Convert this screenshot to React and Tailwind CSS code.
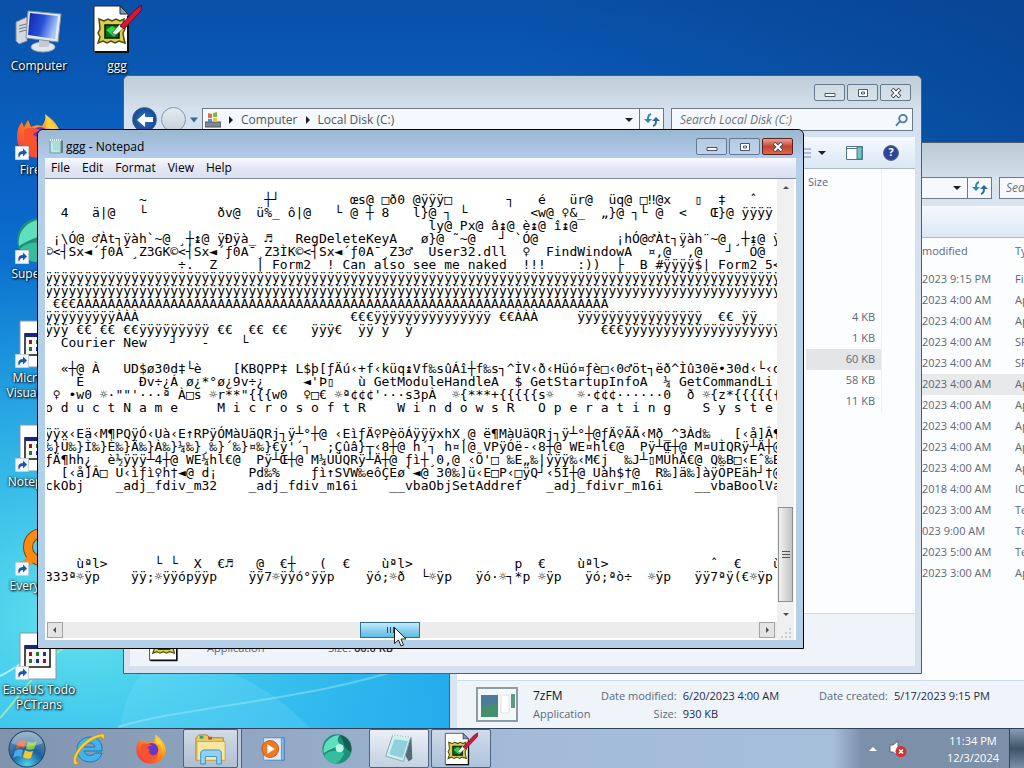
import React from "react";

// a glyph is a little narrower than 8px, so far columns need an extra space
const pad = (cells) =>
  cells.reduce(
    (line, [col, text]) => line.padEnd(Math.round(col * 1.022), " ") + text,
    ""
  );

const y = (count) => "ÿ".repeat(count);

// every entry is one line of the file, as [column, text] pairs
const LINES = [
  [],
  [[12, "~"], [27, "┼┘"], [38, "œs@"], [42, "□ð0"], [46, "@ÿÿÿ□"], [58, "┐"], [62, "é"], [66, "ür@"], [70, "üq@"], [74, "□‼@"], [77, "x"], [81, "▯"], [84, "‡"], [88, "ˆ"]],
  [[2, "4"], [6, "ä|@"], [12, "└"], [22, "ðv@"], [26, "ü%_"], [30, "ô|@"], [36, "└"], [38, "@"], [40, "┼"], [42, "8"], [46, "l}@"], [50, "┐"], [52, "└"], [61, "<w@"], [65, "♀&_"], [69, "„}@"], [73, "┐"], [74, "└"], [76, "@"], [79, "<"], [83, "Œ}@"], [87, "ÿÿÿÿ"]],
  [[48, "ly@"], [51, " Px@"], [56, "â↨@"], [59, " è↨@"], [63, " î↨@"]],
  [[1, "¡\\Ó@"], [6, "♂Àt┐ÿàh`~@"], [17, "¸┼↨@"], [20, " ÿÐÿà_"], [27, "♬"], [31, "RegDeleteKeyA"], [47, "ø}@"], [51, "˜~@"], [57, "┘"], [59, "`Ó@"], [71, "¡hÓ@"], [75, "♂Àt┐ÿàh¨~@"], [86, "¸┼↨@ ÿÐ"]],
  [[0, "©<┤Sx◄´ƒ0A¯¸Z3GK©<┤Sx◄´ƒ0A¯¸Z3ÌK©<┤Sx◄´ƒ0A¯¸Z3♂"], [47, " User32.dll"], [60, "♀"], [63, "FindWindowA"], [75, "¤,@"], [79, "´,@"], [85, "┘"], [88, "Ó@"]],
  [[17, "÷."], [21, "Z"], [26, "|"], [28, "Form2"], [35, "!"], [37, "Can also see me naked"], [60, "!!!"], [67, ":))"], [71, "├"], [74, "B"], [76, "#ÿÿÿÿ$|"], [84, "Form2"], [90, "5<"]],
  [[0, y(94)]],
  [[0, y(94)]],
  [[1, "€€€" + "À".repeat(68)]],
  [[0, y(9) + "ÀÀÀ"], [38, "€€€" + y(15)], [57, "€€ÀÀÀ"], [67, y(16)], [84, "€€"], [87, "ÿÿ"]],
  [[0, y(3)], [4, "€€"], [7, "€€"], [10, "€€" + y(9)], [22, "€€"], [25, "€€"], [28, "€€"], [33, "ÿÿÿ€"], [39, "ÿÿ"], [42, "ÿ"], [45, "ÿ"], [69, "€€€" + y(21)]],
  [[2, "Courier New"], [16, "┘"], [20, "-"], [24, "└"]],
  [],
  [[2, "«┼@"], [5, " À"], [10, "UD$ø30d‡└è"], [23, "[KBQPP‡"], [31, "L$þ[ƒÄú‹+f‹küq↨"], [45, "Vf‰sûÁî┼f‰s┐"], [57, "^ÌV‹ð‹Hüó¤ƒè□‹"], [70, "0♂öt┐"], [75, "ëð^Ìû30ë•30d‹└‹"], [91, "d·"]],
  [[4, "È"], [12, "Ðv÷¿Á"], [18, "ø¿*°ø¿9v÷¿"], [32, "◄'Þ▯"], [39, "ù"], [41, "GetModuleHandleA"], [59, "$"], [61, "GetStartupInfoA"], [77, "¼"], [79, "GetCommandLi"]],
  [[1, "♀"], [3, "•w0"], [7, "☼·\"\"'"], [12, "···ª"], [17, "À□s"], [21, "☼r**\"{{{w0"], [32, "♀□€"], [36, "☼ª¢¢¢'"], [42, "···s3pÀ"], [51, "☼{***+{{{{{s☼"], [67, "☼·¢¢¢······0"], [80, "ð"], [82, "☼{z*{{{{{{"]],
  [[0, "o d u c t N a m e"], [22, "M i c r o s o f t R"], [44, "W i n d o w s R"], [62, "O p e r a t i n g"], [82, "S y s t e"]],
  [],
  [[0, "ÿÿx‹Eä‹M¶PQÿÓ‹Uà‹E↑RPÿÓMàUäQRj┐ÿ┴°┼@"], [35, " ‹EìƒÄ♀PèöÁÿÿÿxhX¸@"], [53, " ë¶MàUäQRj┐ÿ┴°┼@"], [69, "ƒÄ♀ÃÃ‹Mð_^3Àd‰"], [86, "[‹å]Â¶"]],
  [[0, "‰}Ü‰}Ì‰}È‰}Ä‰}À‰}¼‰}¸‰}´‰}¤‰}€ÿ'´┐"], [35, ";Çûâ}┬‹8┼@"], [46, "h´┐"], [50, "h¤|@"], [55, "VPÿÓë-‹8┼@"], [65, " WE¤hl€@"], [73, " Pÿ┴Œ┼@"], [80, " M¤UÌQRÿ┴Ä┼@ƒ"]],
  [[0, "ƒÄ¶hh¿"], [8, "è½ÿÿÿ┴4┼@"], [18, "WE¼hl€@"], [26, "Pÿ┴Œ┼@"], [32, " M¼UÜQRÿ┴Ä┼@"], [44, " ƒì┼¸0,@"], [52, " ‹Õ'□"], [58, "‰E„‰|ÿÿÿ‰‹M€j"], [72, "‰J┴▯MÜhÄ€@"], [82, " Q‰B□‹Eˆ‰B♀U"]],
  [[2, "[‹å]Â□"], [9, "U‹ìƒì♀h†◄@"], [19, " d¡"], [25, "Pd‰%"], [33, "ƒì↑SVW‰eôÇEø`◄@"], [48, " 30‰]ü‹E□P‹□ÿQ┘‹5Ì┼@"], [68, " Uàh$†@"], [75, " R‰]ä‰]àÿÖPEäh┘†@"], [91, " Pÿ"]],
  [[0, "ckObj"], [9, "_adj_fdiv_m32"], [25, "_adj_fdiv_m16i"], [43, "__vbaObjSetAddref"], [63, "_adj_fdivr_m16i"], [81, "__vbaBoolVa"]],
  [],
  [],
  [],
  [],
  [],
  [[4, "ùªl>"], [14, "└"], [16, "└"], [19, "X"], [22, "€♬"], [26, "@"], [29, "€┼"], [34, "("], [37, "€"], [42, "ùªl>"], [59, "p"], [62, "€"], [67, "ùªl>"], [83, "ˆ"], [86, "€"], [91, "ù"]],
  [[0, "333ª☼ÿp"], [11, "ÿÿ;☼ÿÿópÿÿp"], [25, "ÿÿ7☼ÿÿó°ÿÿp"], [40, "ÿó;☼ð"], [47, "└☼ÿp"], [54, "ÿó·☼┐*p"], [61, " ☼ÿp"], [68, "ÿó;ªò÷"], [75, "☼ÿp"], [81, "ÿÿ7ªÿ(€☼ÿp"]],
];

const FILES = [
  ["5/17/2023 9:15 PM", "File folder"],
  ["6/20/2023 4:00 AM", "Application"],
  ["6/20/2023 4:00 AM", "Application"],
  ["6/20/2023 4:00 AM", "SFX File"],
  ["6/20/2023 4:00 AM", "SFX File"],
  ["6/20/2023 4:00 AM", "Application"],
  ["6/20/2023 4:00 AM", "Application"],
  ["6/20/2023 4:00 AM", "Application"],
  ["6/20/2023 4:00 AM", "Application"],
  ["6/20/2023 4:00 AM", "Application"],
  ["6/20/2018 4:00 AM", "ICO File"],
  ["6/20/2023 3:00 AM", "Text Document"],
  ["6/4/2023 9:00 AM", "Text Document"],
  ["5/17/2023 5:00 AM", "Text Document"],
  ["5/17/2023 3:00 AM", "Application"],
];

const SIZES = ["4 KB", "1 KB", "60 KB", "58 KB", "11 KB"];

const FirefoxIcon = ({ className }) => (
  <svg viewBox="0 0 48 48" className={className}>
    <defs>
      <linearGradient id="fox" x1="1" y1="0" x2="0" y2="1">
        <stop offset="0" stopColor="#ffe53a" />
        <stop offset=".45" stopColor="#ff8a1c" />
        <stop offset="1" stopColor="#f0264c" />
      </linearGradient>
    </defs>
    <path d="M30 2c7 5 15 12 16 23 0 12-9 21-22 21S2 37 2 25c0-7 2-12 5-15l2 5 4-7 3 7c4-2 8-2 11-1 3-4 4-8 3-12z" fill="url(#fox)" />
    <circle cx="25" cy="25" r="10" fill="#6a35c9" />
    <path d="M9 18c6-4 12-2 17 1-5 0-7 2-8 4 4 1 5 3 3 5 1 6 9 7 13 2 1 6-4 11-12 10-9-1-15-9-13-22z" fill="#f9532e" />
    <path d="M30 3c7 6 13 13 12 24-2-7-5-10-11-12 1-5 1-9-1-12z" fill="#ffd23c" />
  </svg>
);

const OrbIcon = ({ className }) => (
  <svg viewBox="0 0 48 48" className={className}>
    <circle cx="24" cy="24" r="22" fill="#1d8f7c" />
    <path d="M4 30C2 14 14 4 28 3c-6 7-2 14 6 16C22 20 14 24 4 30z" fill="#5fe0bd" />
    <path d="M28 3c14 2 20 14 17 26-6-4-11-9-11-14-1-4-4-8-6-12z" fill="#175f54" />
    <path d="M5 33c8-8 20-8 30-3-3 8-8 15-15 16C12 45 7 40 5 33z" fill="#35bd9c" />
    <circle cx="28" cy="23" r="6" fill="#bdf5e4" />
  </svg>
);

const GggIcon = ({ className }) => (
  <svg viewBox="0 0 50 50" className={className}>
    <path d="M2 2h26l8 8v38H2z" fill="#fff" stroke="#20242c" strokeWidth="1" />
    <path d="M36 12v36H3" fill="none" stroke="#101010" strokeWidth="2" />
    <path d="M28 2v8h8z" fill="#7f9fc0" stroke="#222" />
    <path d="M7 15l5 2 4-2 4 2 4-2 4 2 4-2-1 6 2 4-2 4 1 6 1 4-6-2-4 2-4-2-4 2-4-2-5 2 2-6-2-4 2-4z" fill="#d8cf4c" stroke="#4d4a12" strokeWidth="1.500" />
    <path d="M13 21h14v13H13z" fill="#0b6c1c" stroke="#111" strokeWidth="1.500" />
    <path d="M14 26l6-4 7 4-5 7z" fill="#2fd44b" />
    <path d="M20 29l4 2 8-7-4-4z" fill="#e8ffe0" stroke="#333" strokeWidth=".6" />
    <path d="M28 22l16-17 6-4-1 6-17 18z" fill="#d3173f" stroke="#6a0b20" strokeWidth="1" />
  </svg>
);

const ShortcutBadge = () => (
  <svg viewBox="0 0 14 14" className="absolute bottom-0 left-0 h-3.5 w-3.5">
    <rect width="14" height="14" fill="#f4f7fb" stroke="#9aa8b8" />
    <path d="M4 12c-2-4 0-7 4-7V2.500l4 4-4 4V8C5.500 8 4.500 9.500 4 12z" fill="#1b57a8" />
  </svg>
);

const ComputerIcon = () => (
  <svg viewBox="0 0 48 48" className="h-12 w-12">
    <defs>
      <linearGradient id="screen" x1="0" y1="0" x2="1" y2=".3">
        <stop offset="0" stopColor="#1226a8" />
        <stop offset=".55" stopColor="#2550d8" />
        <stop offset="1" stopColor="#a9c6f7" />
      </linearGradient>
    </defs>
    <path d="M1 14l11-5v24l-8 3-3-3z" fill="#d4d9df" stroke="#7c8794" />
    <path d="M4 18l7-2M4 21l7-2M4 24l7-2" stroke="#69747f" />
    <ellipse cx="28" cy="39" rx="12" ry="5" fill="#e3e7ec" stroke="#9aa4b1" />
    <path d="M24 31h10v8H24z" fill="#c3cad3" />
    <path d="M13 3l33 3-3 28-32-4z" fill="#e5e9ef" stroke="#8391a5" />
    <path d="M15 5l28 3-3 23-27-4z" fill="url(#screen)" />
  </svg>
);

const DocIcon = () => (
  <svg viewBox="0 0 40 48" className="h-12 w-10">
    <path d="M1 1h36v46H1z" fill="#fff" stroke="#8b95a4" />
    <path d="M6 14h25v21H6z" fill="#f8f8f2" stroke="#111" strokeWidth="1.500" />
    <path d="M6 13h25v4H6z" fill="#1a237e" />
    <path d="M10 20h3v4h-3zM24 27h3v4h-3z" fill="#8c1a2a" />
    <path d="M17 20h3v4h-3zM10 27h3v4h-3z" fill="#1f7a2d" />
    <path d="M24 20h3v4h-3zM17 27h3v4h-3z" fill="#1d2bb8" />
  </svg>
);

const EverythingIcon = () => (
  <svg viewBox="0 0 48 48" className="h-12 w-12">
    <circle cx="27" cy="19" r="14" fill="none" stroke="#8a4300" strokeWidth="10" />
    <circle cx="27" cy="19" r="14" fill="none" stroke="#ff8a12" strokeWidth="8" />
    <path d="M17 29L6 42" stroke="#ff8a12" strokeWidth="8" />
  </svg>
);

const StartIcon = () => (
  <svg viewBox="0 0 40 40" className="h-10 w-10">
    <defs>
      <radialGradient id="start" cx=".5" cy=".95" r=".9">
        <stop offset="0" stopColor="#4fd6f5" />
        <stop offset=".5" stopColor="#1c5f9c" />
        <stop offset="1" stopColor="#6e93b5" />
      </radialGradient>
    </defs>
    <circle cx="20" cy="20" r="18" fill="url(#start)" stroke="#24405f" />
    <path d="M11 13c3-2 5-2 8-1l-2 7c-3-1-5-1-8 1z" fill="#ee5a24" />
    <path d="M21 12c3 2 5 2 9 0l-3 8c-3 1-5 1-8 0z" fill="#8fc63f" />
    <path d="M8 22c3-2 5-2 8-1l-2 7c-3-1-5-1-8 1z" fill="#4aa9e8" />
    <path d="M18 21c3 2 5 2 8 1l-2 7c-3 1-5 1-8-1z" fill="#fbc52c" />
    <path d="M4 14a17 17 0 0 1 32 0c-9 4-22 5-32 0z" fill="#fff" opacity=".3" />
  </svg>
);

const IeIcon = () => (
  <svg viewBox="0 0 36 36" className="h-9 w-9">
    <path d="M19 6c8 0 13 6 12 14H13c1 5 8 6 11 2h7c-2 6-6 9-12 9C11 31 6 25 6 18.500 6 11 12 6 19 6zm-6 10h11c-1-5-9-6-11 0z" fill="#45b3ea" stroke="#1b78b8" />
    <path d="M3 33C-1 26 12 6 30 3c5-1 4 4 2 7 1-4-2-5-6-3C14 12 6 22 5 29c0 2 2 3 4 2-2 2-4 3-6 2z" fill="#f6cf3a" stroke="#b98b12" strokeWidth=".6" />
  </svg>
);

const FolderIcon = () => (
  <svg viewBox="0 0 36 34" className="h-8 w-9">
    <path d="M2 5l3-3h9l2 3h15v24H2z" fill="#e9c867" stroke="#a88431" />
    <path d="M6 3h4v3H6z" fill="#3da35a" />
    <path d="M15 4h4v3h-4z" fill="#c9483f" />
    <path d="M3 9h30v20H3z" fill="#f8e7a0" stroke="#c9a54c" />
    <path d="M7 33V22c0-3 2-4 4-4h14c3 0 4 1 4 4v11h-5v-8H12v8z" fill="#8fd2f2" stroke="#3c8fc6" />
  </svg>
);

const PlayerIcon = () => (
  <svg viewBox="0 0 30 30" className="h-7 w-7">
    <path d="M9 3h18v24H9z" fill="#8fbbe2" stroke="#3f77ad" />
    <path d="M5 3h19v24H5z" fill="#d9eaf8" stroke="#5d93c4" />
    <circle cx="12" cy="15" r="9" fill="#f07a1e" stroke="#c4560b" />
    <path d="M9 10l8 5-8 5z" fill="#fff" />
  </svg>
);

const NotepadIcon = ({ className }) => (
  <svg viewBox="0 0 36 36" className={className}>
    <path d="M12 3l20 2 1 24-4 3z" fill="#556a77" />
    <path d="M11 2l20 3-8 27L3 26z" fill="#cdeef2" stroke="#7ba6ad" />
    <path d="M13 7l15 2-6 19-15-4z" fill="#8fd0da" />
    <path d="M11 2l20 3" stroke="#e9eef0" strokeWidth="3" strokeDasharray="2 1" />
  </svg>
);

const SmallNotepadIcon = () => (
  <svg viewBox="0 0 16 16" className="mr-0.5 h-4 w-4">
    <path d="M2 2h11v13H2z" fill="#a9dcd8" stroke="#6fa3a3" />
    <path d="M13 2v13h2V3z" fill="#5e7d86" />
    <path d="M2 2h11" stroke="#f4fafa" strokeWidth="2" strokeDasharray="1 1" />
    <path d="M4 5v8h7" fill="none" stroke="#d9f3ef" />
  </svg>
);

const WindowControls = ({ active }) => (
  <div className="flex gap-0.5">
    {["Minimize", "Maximize", "Close"].map((name) => (
      <button
        key={name}
        aria-label={name}
        className={`flex h-[17px] w-[31px] items-center justify-center rounded-xs border ${
          active && name === "Close"
            ? "border-[#5b1f1c] bg-linear-to-b from-[#e6a196] via-[#c9412c] to-[#d9694d]"
            : "border-[#64798f] bg-white/20"
        }`}
      >
        <svg viewBox="0 0 12 10" className="h-2.5 w-3">
          {name === "Minimize" && (
            <path d="M1 5.500h10v3H1z" fill="#fff" stroke="#4a5867" />
          )}
          {name === "Maximize" && (
            <path d="M1.500 1.500h9v7h-9zM4.500 4h3v2h-3z" fill="#fff" stroke="#4a5867" />
          )}
          {name === "Close" && (
            <>
              <path d="M2 1l8 8M10 1L2 9" stroke="#4a4f5c" strokeWidth="4" />
              <path d="M2.500 1.500l7 7M9.500 1.500l-7 7" stroke="#fff" strokeWidth="2" />
            </>
          )}
        </svg>
      </button>
    ))}
  </div>
);

const Caret = ({ dir = "down" }) => (
  <svg viewBox="0 0 8 8" className="h-2 w-2 shrink-0" fill="#1a1f28">
    {dir === "down" && <path d="M0 2h8L4 6z" />}
    {dir === "right" && <path d="M2 0v8l4-4z" />}
  </svg>
);

const ScrollArrow = ({ dir }) => (
  <svg viewBox="0 0 8 8" className="h-2 w-2 shrink-0" fill="#4b4f55">
    {dir === "down" && <path d="M1 3h6L4 6z" />}
    {dir === "up" && <path d="M1 5h6L4 2z" />}
    {dir === "right" && <path d="M3 1v6l3-3z" />}
    {dir === "left" && <path d="M5 1v6L2 4z" />}
  </svg>
);

const RefreshIcon = () => (
  <svg viewBox="0 0 16 14" className="h-3.5 w-4" fill="none" strokeWidth="2">
    <path d="M7 1C4 2 4 4 4 7" stroke="#2b8ca3" />
    <path d="M0 6h8l-4 4z" fill="#2b8ca3" />
    <path d="M9 13c3-1 3-3 3-6" stroke="#31679f" />
    <path d="M8 8h8l-4-4z" fill="#31679f" />
  </svg>
);

const DetailLine = ({ label, value }) => (
  <div className="flex gap-1.5">
    <span className="flex-1 text-right text-[#5a6880]">{label}</span>
    <span className="text-[#1c2b4a]">{value}</span>
  </div>
);

const LocalDiskWindow = () => (
  <section className="absolute left-[123px] top-[75px] flex h-[599px] w-[799px] flex-col rounded-t-md border border-[#4e5e6e] bg-[#d5e1ee] px-1.5 pb-[7px]">
    <div className="-mx-1.5 flex h-8 items-start justify-end rounded-t-md bg-linear-to-b from-[#bfcdd8] to-[#d3dfeb] pr-2.5 pt-2">
      <WindowControls />
    </div>
    <div className="flex h-[23px] shrink-0 items-stretch">
      <div className="mr-1 flex w-[68px] items-center gap-1 pl-0.5">
        <button aria-label="Back" className="flex h-[25px] w-[25px] shrink-0 items-center justify-center rounded-full border border-[#3e5f8f] bg-radial from-[#2a78cf] to-[#15387c]">
          <svg viewBox="0 0 16 14" className="h-3.5 w-4" fill="#fff">
            <path d="M8 0v4h8v5H8v5L0 7z" />
          </svg>
        </button>
        <button aria-label="Forward" className="h-[25px] w-[25px] shrink-0 rounded-full border border-[#8795a5] bg-linear-to-b from-[#e6ebf0] to-[#c6d0db]" />
        <svg viewBox="0 0 10 8" className="h-2 w-2 shrink-0">
          <path d="M0 1h10L5 7z" fill="#2f6d9c" />
        </svg>
      </div>
      <div className="flex flex-1 items-center border border-[#6c7a88] bg-[#f5f9fd] pl-0.5 text-[#50545c]">
        <svg viewBox="0 0 16 18" className="mr-1.5 h-[18px] w-4">
          <path d="M0 11h16v5H0z" fill="#7e8a92" stroke="#4d575e" />
          <path d="M3 2l4 1v4H3z" fill="#e2703a" />
          <path d="M8 2l4-1v5H8z" fill="#82b84a" />
          <path d="M3 8h4v3H3z" fill="#4b8fd2" />
          <path d="M8 7h4v4H8z" fill="#edc23f" />
        </svg>
        <Caret dir="right" />
        <button className="mx-1.5">Computer</button>
        <Caret dir="right" />
        <button className="ml-1.5 flex-1 text-left">Local Disk (C:)</button>
        <Caret />
        <button aria-label="Refresh" className="ml-1.5 flex h-full w-6 items-center justify-center border-l border-[#6c7a88]">
          <RefreshIcon />
        </button>
      </div>
      <div className="ml-[7px] mr-0.5 flex w-[242px] items-center border border-[#6c7a88] bg-[#f5f9fd] px-1">
        <input
          aria-label="Search"
          placeholder="Search Local Disk (C:)"
          className="w-full bg-transparent px-1 italic outline-none placeholder:text-[#6c7178]"
        />
        <svg viewBox="0 0 14 14" className="h-3.5 w-3.5" fill="none" stroke="#4b7bb0" strokeWidth="2">
          <circle cx="8.500" cy="5.500" r="4" />
          <path d="M5.500 8.500L1 13" />
        </svg>
      </div>
    </div>
    <div className="mt-1.5 flex h-8 shrink-0 items-center justify-end gap-5 border-b border-[#a9bacb] bg-linear-to-b from-[#f5f9fe] to-[#dbe7f4] pr-4">
      <button aria-label="Change view" className="flex items-center gap-1.5">
        <svg viewBox="0 0 14 12" className="h-3 w-3.5" stroke="#6d8fb5">
          <path d="M1 2h12M1 6h12M1 10h12" />
        </svg>
        <Caret />
      </button>
      <button aria-label="Preview pane">
        <svg viewBox="0 0 17 14" className="h-3.5 w-[17px]">
          <path d="M.5.5h16v13H.5z" fill="#fff" stroke="#55748a" />
          <path d="M11 1h5v12h-5z" fill="#6fc4c8" stroke="#3c8187" />
          <path d="M1 2.500h10" stroke="#55748a" />
        </svg>
      </button>
      <button aria-label="Help" className="flex h-4 w-4 items-center justify-center rounded-full border border-[#5c6ea0] bg-[#2b4794] text-[11px] font-bold text-white">
        ?
      </button>
    </div>
    <div className="flex-1 bg-[#fcfdfe] pl-[676px]">
      <table className="w-[76px] border-r border-[#edf1f6] text-[11px] text-[#5d6878]">
        <thead>
          <tr className="h-[26px]">
            <th className="pl-0.5 text-left font-normal">Size</th>
          </tr>
        </thead>
        <tbody>
          <tr className="h-28">
            <td />
          </tr>
          {SIZES.map((size) => (
            <tr key={size} className="h-[21px]">
              <td className={`pr-1.5 text-right ${size === "60 KB" ? "bg-[#e4e5e7]" : ""}`}>{size}</td>
            </tr>
          ))}
        </tbody>
      </table>
    </div>
    <div className="flex h-[53px] shrink-0 items-end border-t border-[#cfdbe8] bg-[#eff4fb] pb-1 pl-[18px] text-[11px]">
      <GggIcon className="h-10 w-10" />
      <span className="mb-1.5 ml-[19px] w-[121px] text-[#5a6880]">Application</span>
      <span className="mb-1.5 text-[#5a6880]">
        Size: <b className="font-semibold text-[#1c2b4a]">60.0 KB</b>
      </span>
    </div>
  </section>
);

const ProgramWindow = () => (
  <section className="absolute -bottom-1 left-[449px] -right-[60px] top-[142px] flex flex-col border border-[#4e5e6e] bg-[#d9e4ef] pl-[7px] text-[11px]">
    <div className="-ml-[7px] h-[34px] shrink-0 bg-linear-to-b from-[#bccad6] to-[#d3dfeb]" />
    <div className="flex h-[22px] shrink-0 text-xs">
      <div className="flex w-[535px] items-center justify-end border border-[#6c7a88] bg-[#f5f9fd]">
        <Caret />
        <button aria-label="Refresh" className="ml-1.5 flex h-full w-6 items-center justify-center border-l border-[#6c7a88]">
          <RefreshIcon />
        </button>
      </div>
      <input
        aria-label="Search"
        placeholder="Search"
        className="ml-[7px] min-w-0 flex-1 border border-[#6c7a88] bg-[#f5f9fd] px-1.5 italic outline-none placeholder:text-[#6c7178]"
      />
    </div>
    <div className="mt-[7px] h-8 shrink-0 border-b border-[#a9bacb] bg-linear-to-b from-[#f5f9fe] to-[#dbe7f4]" />
    <div className="min-h-0 flex-1 overflow-hidden bg-[#fcfdfe] pl-[438px]">
      <table className="w-full table-fixed text-[#5d6878]">
        <thead>
          <tr className="h-[26px] text-left">
            <th className="w-[120px] font-normal">Date modified</th>
            <th className="font-normal">Type</th>
          </tr>
        </thead>
        <tbody>
          <tr className="h-[5px]">
            <td />
            <td />
          </tr>
          {FILES.map(([date, type], i) => (
            <tr key={i} className={`h-[21px] whitespace-nowrap ${i === 5 ? "bg-[#e8e9ea]" : ""}`}>
              <td>{date}</td>
              <td>{type}</td>
            </tr>
          ))}
        </tbody>
      </table>
    </div>
    <div className="flex h-[51px] shrink-0 items-start border-t border-[#cfdbe8] bg-[#eff4fb] pl-[19px] pt-1.5">
      <svg viewBox="0 0 42 35" className="mr-[15px] h-[35px] w-[42px]">
        <path d="M1 1h40v33H1z" fill="#f5f8f9" stroke="#8f9ba5" strokeWidth="2" />
        <path d="M5 8h17v22H5z" fill="#468f6d" />
        <path d="M5 8h17v8L5 20z" fill="#4a7d9c" />
        <path d="M25 8h8v18h-8z" fill="#fff" stroke="#dbe2e8" />
        <path d="M35 7h4v14h-4z" fill="#5d9a84" />
      </svg>
      <div className="w-[68px] leading-[18px] text-[#5a6880]">
        <p className="text-xs leading-[18px] text-[#10151f]">7zFM</p>
        <p>Application</p>
      </div>
      <div className="grid grid-cols-[auto_auto] gap-x-1.5 leading-[18px] text-[#5a6880]">
        <span className="text-right">Date modified:</span>
        <span className="text-[#1c2b4a]">6/20/2023 4:00 AM</span>
        <span className="text-right">Size:</span>
        <span className="text-[#1c2b4a]">930 KB</span>
      </div>
      <div className="ml-10 leading-[18px]">
        <DetailLine label="Date created:" value="5/17/2023 9:15 PM" />
      </div>
    </div>
  </section>
);

const NotepadWindow = () => (
  <section className="absolute left-[37px] top-[129px] flex h-[520px] w-[767px] flex-col rounded-t-md border border-black bg-[#b4cfe8] px-[7px] pb-2">
    <div className="-mx-[7px] flex h-7 shrink-0 items-start rounded-t-md bg-linear-to-b from-[#9bb8d0] to-[#b3cbec] pl-2.5 pr-2.5 pt-2">
      <SmallNotepadIcon />
      <h1 className="flex-1 leading-[18px] text-black">ggg - Notepad</h1>
      <WindowControls active />
    </div>
    <nav className="flex h-[21px] shrink-0 gap-3 border-b border-[#7f8ba3] bg-linear-to-b from-[#f8faff] via-[#e4e8f5] to-[#dadff0] pl-1.5">
      {["File", "Edit", "Format", "View", "Help"].map((item) => (
        <button key={item}>{item}</button>
      ))}
    </nav>
    <div className="flex min-h-0 flex-1 bg-white">
      <div className="flex min-w-0 flex-1 flex-col pl-0.5">
        <div className="min-h-0 flex-1 overflow-hidden">
          <textarea
            aria-label="File contents"
            readOnly
            wrap="off"
            spellCheck={false}
            value={LINES.map(pad).join("\n")}
            className="-ml-0.5 block h-full w-[calc(100%+2px)] resize-none overflow-hidden pt-px font-['DejaVu_Sans_Mono',monospace] text-[13px] leading-[13px] text-black outline-none"
          />
        </div>
        <div className="mb-0.5 flex h-4 shrink-0 items-stretch bg-[#ececec]">
          <button aria-label="Scroll left" className="flex w-4 items-center justify-center border border-[#a3a3a3] bg-[#e4e4e4]">
            <ScrollArrow dir="left" />
          </button>
          <div className="flex flex-1 pl-[297px]">
            <div className="flex w-[60px] items-center justify-center gap-0.5 border border-[#2f6f93] bg-linear-to-b from-[#c4ebf8] via-[#8fd0ee] to-[#5cbce0]">
              <i className="h-1.5 w-px bg-[#24516b]" />
              <i className="h-1.5 w-px bg-[#24516b]" />
              <i className="h-1.5 w-px bg-[#24516b]" />
            </div>
          </div>
          <button aria-label="Scroll right" className="mr-0.5 flex w-4 items-center justify-center border border-[#a3a3a3] bg-[#e4e4e4]">
            <ScrollArrow dir="right" />
          </button>
        </div>
      </div>
      <div className="mr-0.5 flex w-[17px] flex-col items-center bg-[#f0f0f0]">
        <button aria-label="Scroll up" className="flex h-[18px] items-center">
          <ScrollArrow dir="up" />
        </button>
        <div className="flex w-full flex-1 flex-col justify-end">
          <div className="mx-px flex h-[95px] flex-col items-center justify-center gap-0.5 border border-[#909090] bg-linear-to-r from-[#f2f2f2] to-[#c2c2c2]">
            <i className="h-px w-2 bg-[#555]" />
            <i className="h-px w-2 bg-[#555]" />
            <i className="h-px w-2 bg-[#555]" />
          </div>
        </div>
        <button aria-label="Scroll down" className="flex h-6 items-center">
          <ScrollArrow dir="down" />
        </button>
        <svg viewBox="0 0 14 14" className="h-3.5 w-3.5" fill="#c9cdd4">
          <path d="M10 2h2v2h-2zM6 6h2v2H6zM10 6h2v2h-2zM2 10h2v2H2zM6 10h2v2H6zM10 10h2v2h-2z" />
        </svg>
      </div>
    </div>
  </section>
);

const DESKTOP = [
  { label: "Computer", icon: <ComputerIcon /> },
  { label: "Firefox", icon: <FirefoxIcon className="h-12 w-12" />, shortcut: true },
  { label: "SuperAnti", icon: <OrbIcon className="h-12 w-12" />, shortcut: true },
  { label: "Microsoft Visual Basic", icon: <DocIcon />, shortcut: true },
  { label: "Notepad++", icon: <DocIcon />, shortcut: true },
  { label: "Everything", icon: <EverythingIcon />, shortcut: true },
  { label: "EaseUS Todo PCTrans", icon: <DocIcon />, shortcut: true },
];

const DesktopIcon = ({ label, icon, shortcut }) => (
  <button className="flex h-[104px] w-[78px] flex-col items-center text-white">
    <span className="relative flex h-12 w-12 shrink-0 justify-center">
      {icon}
      {shortcut && <ShortcutBadge />}
    </span>
    <span className="mt-0.5 leading-[15px] [text-shadow:1px_1px_2px_#000,0_0_3px_#000]">{label}</span>
  </button>
);

const Wallpaper = () => (
  <svg viewBox="0 0 1024 728" preserveAspectRatio="none" className="absolute inset-0 h-full w-full">
    <defs>
      <linearGradient id="sky" x1="0" y1="0" x2="0" y2="1">
        <stop offset="0" stopColor="#0950a8" />
        <stop offset=".3" stopColor="#0a68cb" />
        <stop offset=".65" stopColor="#1795dc" />
        <stop offset="1" stopColor="#1ea6ee" />
      </linearGradient>
      <radialGradient id="glow" cx=".08" cy=".85" r=".5">
        <stop offset="0" stopColor="#62e4ee" />
        <stop offset="1" stopColor="#2cbdf0" stopOpacity="0" />
      </radialGradient>
      <linearGradient id="night" x1="0" y1="0" x2="1" y2="0">
        <stop offset=".5" stopColor="#063a80" stopOpacity="0" />
        <stop offset="1" stopColor="#063a80" stopOpacity=".5" />
      </linearGradient>
    </defs>
    <path d="M0 0h1024v728H0z" fill="url(#sky)" />
    <path d="M0 0h1024v728H0z" fill="url(#glow)" />
    <path d="M0 0h1024v400H0z" fill="url(#night)" />
    <g fill="none" stroke="#c8f6ff">
      <path d="M0 676c20-10 34-22 42-34" strokeWidth="2" opacity=".8" />
      <path d="M0 718c22-24 40-54 66-72" stroke="#a5f2a0" strokeWidth="2" opacity=".8" />
      <path d="M118 727c80-24 210-26 330-74" strokeWidth="2" opacity=".35" />
      <path d="M120 728c10-70 50-80 100-60s70 40 90 60" fill="#8eeaff" stroke="none" opacity=".18" />
    </g>
  </svg>
);

const Taskbar = () => (
  <footer className="relative z-10 flex h-10 shrink-0 items-center border-t border-[#2f4157] bg-linear-to-r from-[#7f93ad] via-[#a3bbd9] to-[#a6c0dc]">
    <button aria-label="Start" className="ml-[7px] w-10">
      <StartIcon />
    </button>
    <button aria-label="Internet Explorer" className="ml-6 w-9">
      <IeIcon />
    </button>
    <button aria-label="Firefox" className="ml-7 w-8">
      <FirefoxIcon className="h-8 w-8" />
    </button>
    <button aria-label="Windows Explorer" className="ml-4 flex h-full w-[55px] items-center justify-center rounded-xs border border-[#4f6480] bg-linear-to-b from-white/60 to-white/30">
      <FolderIcon />
    </button>
    <span className="h-full w-1 border-r border-[#4f6480] bg-white/40" />
    <button aria-label="Media Player" className="ml-[17px] w-7">
      <PlayerIcon />
    </button>
    <button aria-label="SuperAnti" className="ml-[34px] w-8">
      <OrbIcon className="h-8 w-8" />
    </button>
    <button aria-label="Notepad" className="ml-4 flex h-full w-[60px] items-center justify-center rounded-xs border border-[#4f6480] bg-linear-to-b from-white/80 to-white/40">
      <NotepadIcon className="h-8 w-8" />
    </button>
    <button aria-label="ggg" className="ml-0.5 flex h-full w-[60px] items-center justify-center rounded-xs border border-[#4f6480] bg-linear-to-b from-white/50 to-white/15">
      <GggIcon className="h-[34px] w-[34px]" />
    </button>
    <div className="ml-auto flex h-full items-center bg-linear-to-r from-[#7c90aa]/0 via-[#7c90aa] via-15% to-[#7c90aa] pl-9 text-white">
      <button aria-label="Show hidden icons">
        <svg viewBox="0 0 8 6" className="h-1.5 w-2">
          <path d="M0 5h8L4 1z" fill="#fff" />
        </svg>
      </button>
      <button aria-label="Volume muted" className="ml-3">
        <svg viewBox="0 0 18 18" className="h-[18px] w-[18px]">
          <path d="M1 5h3l5-4v15l-5-4H1z" fill="#fff" stroke="#5c6a7c" />
          <circle cx="12" cy="11.500" r="5.500" fill="#d8302c" />
          <path d="M10 9.500l4 4M14 9.500l-4 4" stroke="#fff" strokeWidth="1.500" />
        </svg>
      </button>
      <div className="ml-10 text-center text-[11px] leading-[17px]">
        <p>11:34 PM</p>
        <p>12/3/2024</p>
      </div>
      <button aria-label="Show desktop" className="ml-2.5 h-full w-[15px] border-l border-[#33465d] bg-linear-to-b from-[#8b9db4] via-[#3f5469] to-[#7c90a7]" />
    </div>
  </footer>
);

const App = () => {
  return (
    <div className="flex h-screen flex-col overflow-hidden font-['Open_Sans','Noto_Sans',sans-serif] text-xs">
      <main className="relative min-h-0 flex-1 overflow-hidden">
        <Wallpaper />
        <div className="absolute left-0 top-2 flex">
          <div className="flex flex-col">
            {DESKTOP.map((item) => (
              <DesktopIcon key={item.label} {...item} />
            ))}
          </div>
          <DesktopIcon label="ggg" icon={<GggIcon className="-mt-1 h-[50px] w-[50px] shrink-0" />} />
        </div>
        <ProgramWindow />
        <LocalDiskWindow />
        <NotepadWindow />
        <svg viewBox="0 0 12 20" className="absolute left-[394px] top-[627px] h-5 w-3">
          <path d="M.5.5v16l4-3.500 2.500 6 2.500-1-2.500-6h5z" fill="#fff" stroke="#1b1b1b" />
        </svg>
      </main>
      <Taskbar />
    </div>
  );
};

export default App;
